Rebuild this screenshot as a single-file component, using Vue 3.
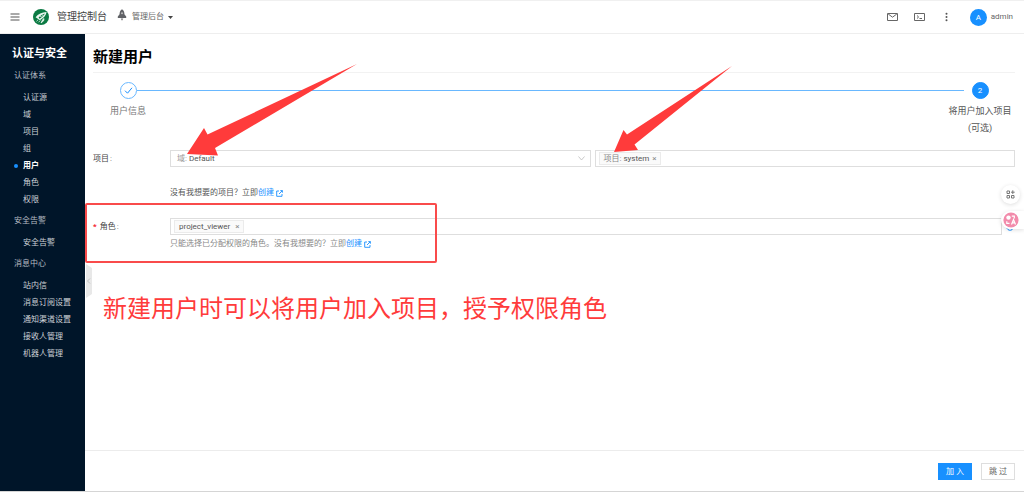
<script setup>
import { ref } from 'vue'

const groups = [
  { name: '认证体系', items: ['认证源', '域', '项目', '组', '用户', '角色', '权限'] },
  { name: '安全告警', items: ['安全告警'] },
  { name: '消息中心', items: ['站内信', '消息订阅设置', '通知渠道设置', '接收人管理', '机器人管理'] },
]
const current = ref('用户')
const domain = ref('Default')
</script>

<template>
  <div class="app">
    <header class="topbar">
      <button class="icon-btn menu" aria-label="菜单">
        <svg width="10" height="10" viewBox="0 0 10 10" stroke="#555" stroke-width="1.2"><path d="M.5 2h9M.5 5h9M.5 8h9" /></svg>
      </button>
      <svg class="logo" width="16" height="16" viewBox="0 0 16 16">
        <circle cx="8" cy="8" r="8" fill="#0b7a43" />
        <path d="M2.6 8.2C5 5 9 3.200 13.600 3.100C13 6.500 10.500 9.500 6.800 11.200L4.800 9.700Z" fill="#e9f5ee" />
        <path d="M5.600 8.600C7.500 6.600 9.500 5.400 11.900 4.600C10.500 7 8.600 8.700 6.600 9.700Z" fill="#0b7a43" />
        <path d="M7 7.400L9 8M8.800 6L10.400 6.500" stroke="#e9f5ee" stroke-width=".7" />
        <path d="M3.500 12.300L5.200 10.700M5.500 13.300L7.300 11.500M8 14L9.700 10.600L11 9.600L10.600 11.800Z" stroke="#e9f5ee" stroke-width=".8" fill="#e9f5ee" />
      </svg>
      <span class="brand">管理控制台</span>
      <svg class="rocket" width="10" height="12" viewBox="0 0 10 12">
        <path d="M5 .3C7 1.600 7.500 3.500 7.400 5.300L9.200 7.400V9H.8V7.400L2.600 5.300C2.500 3.500 3 1.600 5 .3Z" fill="#606266" />
        <circle cx="5" cy="4.300" r="1" fill="#bbb" />
        <path d="M3.700 9.600h2.600L5 11.700Z" fill="#777" />
      </svg>
      <button class="switcher">管理后台
        <svg width="5" height="3" viewBox="0 0 5 3"><path d="M0 0h5L2.500 3Z" fill="#444" /></svg>
      </button>
      <nav class="tools">
        <button class="icon-btn" aria-label="消息">
          <svg width="11" height="10" viewBox="0 0 11 10" fill="none" stroke="#666"><path d="M.5 1.500h10v7H.5ZM1.200 2L5.500 5.200L9.800 2" /></svg>
        </button>
        <button class="icon-btn" aria-label="终端">
          <svg width="11" height="10" viewBox="0 0 11 10" fill="none" stroke="#666"><path d="M.5 1.500h10v7H.5ZM3 3.500L4.600 5L3 6.500M5.500 6.500h2.500" /></svg>
        </button>
        <button class="icon-btn" aria-label="更多">
          <svg width="11" height="10" viewBox="0 0 11 10" fill="#555"><circle cx="5.500" cy="1.700" r="1" /><circle cx="5.500" cy="5" r="1" /><circle cx="5.500" cy="8.300" r="1" /></svg>
        </button>
      </nav>
      <button class="account"><span class="avatar">A</span>admin</button>
    </header>

    <div class="body">
      <aside class="sidebar">
        <h2>认证与安全</h2>
        <nav>
          <section v-for="g in groups" :key="g.name">
            <h3>{{ g.name }}</h3>
            <ul>
              <li v-for="i in g.items" :key="i">
                <a href="#" :class="{ active: i === current }" @click.prevent="current = i">{{ i }}</a>
              </li>
            </ul>
          </section>
        </nav>
      </aside>

      <main class="main">
        <button class="collapse" aria-label="收起">
          <svg width="6" height="34" viewBox="0 0 6 34"><path d="M0 0L6 4V30L0 34Z" fill="#e8e8e8" /><path d="M4 14.500L1.500 17L4 19.500" fill="none" stroke="#b5b5b5" stroke-width=".8" /></svg>
        </button>
        <div class="content">
          <h1>新建用户</h1>
          <ol class="steps">
            <li class="step">
              <span class="dot done">
                <svg width="9" height="9" viewBox="0 0 9 9" fill="none" stroke="#1890ff"><path d="M1 4.700L3.500 7.200L8 1.800" /></svg>
              </span>
              <span class="step-name">用户信息</span>
            </li>
            <li class="rail" aria-hidden="true"></li>
            <li class="step">
              <span class="dot">2</span>
              <span class="step-name now">将用户加入项目<br>(可选)</span>
            </li>
          </ol>

          <form class="form" @submit.prevent>
            <div class="row project">
              <label class="label" for="domain">项目<i>:</i></label>
              <div class="control">
                <div class="pair">
                  <div class="field">
                    <label class="prefix" for="domain">域:</label>
                    <select id="domain" v-model="domain"><option>Default</option></select>
                    <svg class="chev" width="7" height="5" viewBox="0 0 7 5" fill="none" stroke="#bbb" stroke-width=".8"><path d="M.5 .5L3.500 4L6.500 .5" /></svg>
                    <svg class="arrow first" width="170" height="91" viewBox="0 0 170 91"><path d="M170 0L20.500 70.500L17 64L0 90L31 91.500L28 84Z" fill="#ff3b3b" /></svg>
                  </div>
                  <div class="field">
                    <span class="tag"><em>项目:</em> system <button aria-label="移除 system">×</button></span>
                    <input aria-label="项目">
                    <svg class="arrow second" width="118" height="86" viewBox="0 0 118 86"><path d="M118 0L13 68.500L9.500 64L0 86L24 84L20.500 78.500Z" fill="#ff3b3b" /></svg>
                  </div>
                </div>
                <p class="help dark">没有我想要的项目？立即<a href="#">创建
                  <svg width="7" height="7" viewBox="0 0 7 7" fill="none" stroke="#1890ff" stroke-width=".9"><path d="M3 1H.7V6.300H6V4M3 4L6.300 .7M4.300 .6H6.400V2.700" /></svg></a></p>
              </div>
            </div>
            <div class="row role">
              <label class="label" for="role"><b>*</b>角色<i>:</i></label>
              <div class="control">
                <div class="role-line">
                  <div class="field">
                    <span class="tag wide">project_viewer <button aria-label="移除 project_viewer">×</button></span>
                    <input id="role">
                  </div>
                  <button class="refresh" aria-label="刷新">
                    <svg width="8" height="8" viewBox="0 0 8 8" fill="none" stroke="#1890ff"><path d="M7 2.500A3.300 3.300 0 1 0 7 5.500M7.200 .6V2.700H5" /></svg>
                  </button>
                </div>
                <p class="help">只能选择已分配权限的角色。没有我想要的？立即<a href="#">创建
                  <svg width="7" height="7" viewBox="0 0 7 7" fill="none" stroke="#1890ff" stroke-width=".9"><path d="M3 1H.7V6.300H6V4M3 4L6.300 .7M4.300 .6H6.400V2.700" /></svg></a></p>
              </div>
            </div>
          </form>
          <p class="note">新建用户时可以将用户加入项目，授予权限角色</p>
        </div>
        <footer class="actions">
          <button class="btn primary">加 入</button>
          <button class="btn">跳 过</button>
        </footer>
      </main>
    </div>

    <div class="dock">
      <button class="apps" aria-label="应用">
        <svg width="9" height="9" viewBox="0 0 9 9" fill="none" stroke="#777"><path d="M1 1h2.500v2.500H1ZM1 5.500h2.500V8H1ZM5.500 5.500H8V8H5.500ZM6.800 .3V4M5 2.200h3.700" /></svg>
      </button>
      <button class="translate" aria-label="翻译">
        <svg width="16" height="16" viewBox="0 0 16 16">
          <circle cx="8" cy="8" r="7.600" fill="#f28bab" />
          <circle cx="5.500" cy="5.600" r="2.200" fill="#fff" />
          <path d="M8.800 4.200h2.500V6.500M3.800 9.200V11.300H6.500M8.500 12.500L10.500 7.500L12.500 12.500M9.200 10.900h2.600" fill="none" stroke="#fff" stroke-width="1.200" />
        </svg>
      </button>
    </div>
  </div>
</template>

<style>
body { margin: 0; }
</style>

<style scoped>
* { box-sizing: border-box; }
.app { min-height: 100vh; display: flex; flex-direction: column; background: #fff; color: #666; font: 8px/16px Roboto, "Noto Sans CJK SC", sans-serif; position: relative; }
h1, h2, h3, p, ul, ol { margin: 0; padding: 0; list-style: none; }
button { font: inherit; color: inherit; background: none; border: 0; padding: 0; margin: 0; cursor: pointer; }
a { color: #1890ff; text-decoration: none; }
svg { display: block; }

.topbar { height: 34px; border-top: 1px solid #f0f0f0; border-bottom: 1px solid #eee; display: flex; align-items: center; padding: 0 11px 0 10px; }
.logo { margin: 0 8px 0 13px; }
.brand { font-size: 10px; color: #444; margin-right: 10px; }
.rocket { margin: 0 5px 4px 0; }
.switcher { display: flex; align-items: center; gap: 4px; }
.tools { display: flex; gap: 16px; margin-left: auto; }
.account { display: flex; align-items: center; gap: 4px; margin-left: 18px; }
.avatar { width: 17px; height: 17px; line-height: 17px; border-radius: 50%; background: #1890ff; color: #fff; text-align: center; }

.body { flex: 1; display: flex; border-bottom: 1px solid #d5d5d5; }
.sidebar { width: 85px; background: #001529; color: #b5bbc2; flex: none; padding-top: 11px; }
.sidebar h2 { font-size: 11px; line-height: 18px; color: #fff; padding-left: 12px; margin-bottom: 3px; }
.sidebar h3 { font-size: 8px; line-height: 20px; font-weight: 400; padding-left: 14px; margin-bottom: 3px; }
.sidebar ul { margin-bottom: 3px; }
.sidebar a { display: flex; align-items: center; height: 17px; padding-left: 23px; color: #cbd0d5; }
.sidebar a.active { color: #fff; font-weight: 700; padding-left: 14px; }
.active::before { content: ""; width: 4px; height: 4px; border-radius: 50%; background: #1890ff; margin-right: 5px; }

.main { flex: 1; min-width: 0; display: flex; flex-direction: column; position: relative; }
.collapse { position: absolute; left: 1px; top: 230px; }
.content { flex: 1; padding: 10px 9px 0 8px; }
h1 { font-size: 15px; line-height: 26px; color: #000; padding-bottom: 2px; border-bottom: 1px solid #f2f2f2; }
.steps { display: flex; padding-top: 9px; align-items: flex-start; }
.step { width: 70px; display: flex; flex-direction: column; align-items: center; font-size: 9px; line-height: 17px; text-align: center; }
.dot { width: 17px; height: 17px; border-radius: 50%; border: 1px solid #1890ff; background: #1890ff; color: #fff; display: grid; place-items: center; font-size: 8px; line-height: 15px; }
.dot.done { background: #fff; border-color: #69b8ff; }
.step-name { margin-top: 4px; color: #777; white-space: nowrap; }
.step-name.now { color: #555; }
.rail { flex: 1; height: 1px; background: #69b8ff; margin: 8px -19px 0 -26px; }

.form { padding-top: 13px; }
.row { display: flex; }
.label { width: 77px; flex: none; line-height: 17px; color: #444; }
.label i { font-style: normal; margin-left: 1px; color: #777; }
.label b { color: #f5222d; margin-right: 3px; }
.control { flex: 1; min-width: 0; }
.pair { display: flex; gap: 4px; }
.field { flex: 1; min-width: 0; height: 17px; border: 1px solid #dedede; display: flex; align-items: center; position: relative; padding-left: 3px; }
.prefix { color: #999; margin: 0 2px 0 3px; }
select { flex: 1; appearance: none; border: 0; background: none; padding: 0; height: 15px; font: inherit; color: #555; }
.chev { margin-right: 5px; }
.field input { flex: 1; min-width: 0; border: 0; outline: 0; height: 13px; font: inherit; padding: 0 3px; background: none; }
.tag { height: 13px; line-height: 11px; border: 1px solid #ebebeb; background: #fafafa; padding: 0 3px 0 4px; white-space: nowrap; color: #555; }
.tag em { font-style: normal; color: #888; }
.tag button { color: #888; margin-left: 1px; }
.tag.wide button { margin-left: 3px; }
.help { color: #888; padding-top: 1px; }
.help.dark { color: #555; padding-top: 18px; }
.help a { display: inline-flex; align-items: center; gap: 2px; }
.role { position: relative; padding-top: 15px; margin-top: 2px; }
.role::before { content: ""; position: absolute; left: -8px; top: 0; width: 348px; height: 56px; border: 2px solid #f94b4b; border-radius: 2px; pointer-events: none; z-index: 1; }
.role-line { display: flex; align-items: center; gap: 4px; }
.refresh { width: 9px; }
.arrow { position: absolute; overflow: visible; pointer-events: none; z-index: 2; }
.arrow.first { left: 16px; top: -87px; }
.arrow.second { left: 18px; top: -85px; }
.note { font-size: 24px; line-height: 36px; color: #ff3b3b; padding: 39px 0 0 10px; }

.actions { height: 41px; border-top: 1px solid #ececec; display: flex; justify-content: flex-end; align-items: center; gap: 9px; padding-right: 9px; }
.btn { width: 34px; height: 17px; line-height: 15px; border: 1px solid #dedede; background: #fff; color: #666; }
.btn.primary { background: #1890ff; border-color: #1890ff; color: #fff; }

.dock { position: absolute; right: 0; top: 185px; width: 23px; display: flex; flex-direction: column; gap: 7px; z-index: 3; }
.apps { width: 19px; height: 19px; border-radius: 50%; background: #fff; box-shadow: 0 1px 4px #0002; display: grid; place-items: center; }
.translate { height: 18px; padding-left: 2px; background: #fff; border-radius: 9px 0 0 9px; box-shadow: 0 1px 4px #0002; }
</style>
